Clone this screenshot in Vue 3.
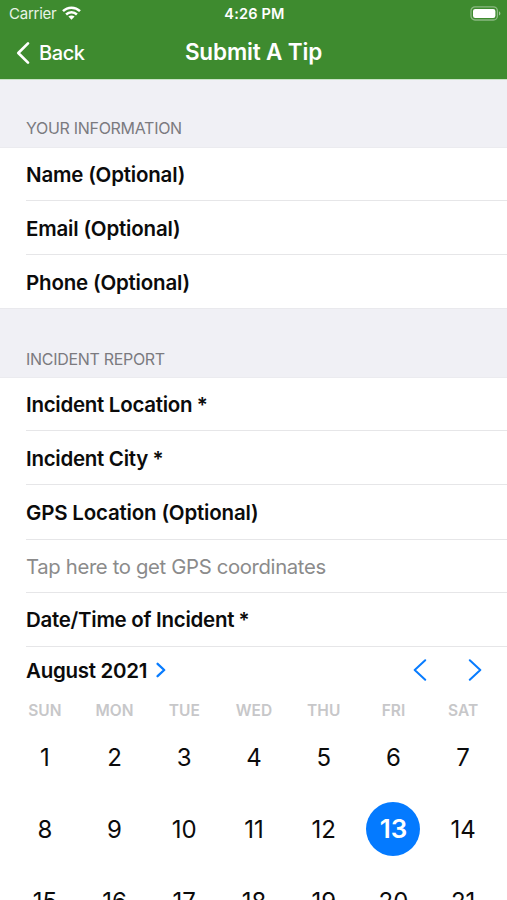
<script setup>
const contactFields = ['Name (Optional)', 'Email (Optional)', 'Phone (Optional)']
const incidentFields = [
  { label: 'Incident Location', required: true },
  { label: 'Incident City', required: true },
  { label: 'GPS Location (Optional)', tall: true },
  { label: 'Tap here to get GPS coordinates', hint: true },
  { label: 'Date/Time of Incident', required: true },
]
const weekdays = ['SUN', 'MON', 'TUE', 'WED', 'THU', 'FRI', 'SAT']
const days = Array.from({ length: 21 }, (_, i) => i + 1)
const selected = 13
</script>

<template>
  <div class="screen">
    <header class="top">
      <div class="status">
        <div class="carrier">
          <span>Carrier</span>
          <svg class="wifi" width="19" height="14" viewBox="0 0 19 14" fill="none" stroke="#fff" stroke-width="2.5">
            <path d="M1 5.2C5.7 .6 13.3 .6 18 5.2" />
            <path d="M4.1 8.5C7.1 5.6 11.9 5.6 14.9 8.5" />
            <path d="M9.5 13.7L6.4 10.6C8.1 9 10.9 9 12.6 10.6Z" fill="#fff" stroke="none" />
          </svg>
        </div>
        <span class="clock">4:26 PM</span>
        <svg class="battery" width="31" height="15" viewBox="0 0 31 15">
          <rect x="1" y=".8" width="26.4" height="13.2" rx="4" fill="none" stroke="#fff" stroke-opacity=".4" stroke-width="1.3" />
          <rect x="3" y="2.9" width="22.4" height="9" rx="2.2" fill="#fff" />
          <path d="M29 5.2C30.9 6 30.9 8.8 29 9.6Z" fill="#fff" fill-opacity=".5" />
        </svg>
      </div>
      <nav class="nav">
        <div class="back">
          <svg width="14" height="24" viewBox="0 0 14 24" fill="none" stroke="#fff" stroke-width="2.7" stroke-linecap="round" stroke-linejoin="round">
            <path d="M12 2.4L2.3 12L12 21.6" />
          </svg>
          <span>Back</span>
        </div>
        <h1>Submit A Tip</h1>
      </nav>
    </header>

    <h2 class="section first"><span>YOUR INFORMATION</span></h2>
    <ul class="list">
      <li v-for="f in contactFields" :key="f"><span>{{ f }}</span></li>
    </ul>

    <h2 class="section"><span>INCIDENT REPORT</span></h2>
    <ul class="list incident">
      <li v-for="f in incidentFields" :key="f.label" :class="{ hint: f.hint, required: f.required, tall: f.tall }">
        <span>{{ f.label }}<span v-if="f.required" class="star"> *</span></span>
      </li>
    </ul>

    <section class="calendar">
      <div class="month">
        <span class="name">August 2021</span>
        <svg class="more" width="10" height="16" viewBox="0 0 10 16" fill="none" stroke="#087cff" stroke-width="2.3" stroke-linecap="round" stroke-linejoin="round">
          <path d="M1.6 1.8L8.2 8L1.6 14.2" />
        </svg>
        <div class="arrows">
          <svg width="14" height="22" viewBox="0 0 14 22" fill="none" stroke="#087cff" stroke-width="2" stroke-linecap="round" stroke-linejoin="round">
            <path d="M12.2 1.2L1.7 11L12.2 20.8" />
          </svg>
          <svg width="14" height="22" viewBox="0 0 14 22" fill="none" stroke="#087cff" stroke-width="2" stroke-linecap="round" stroke-linejoin="round">
            <path d="M1.8 1.2L12.3 11L1.8 20.8" />
          </svg>
        </div>
      </div>
      <div class="grid weekdays">
        <span v-for="w in weekdays" :key="w">{{ w }}</span>
      </div>
      <div class="grid days">
        <span v-for="d in days" :key="d" :class="{ selected: d === selected }">{{ d }}</span>
      </div>
    </section>
  </div>
</template>

<style>
body {
  margin: 0;
  background: #fff;
}
</style>

<style scoped>
.screen {
  width: 507px;
  height: 900px;
  overflow: hidden;
  background: #fff;
  color: #0b0b0b;
  font-family: Inter, 'Liberation Sans', sans-serif;
}
.top {
  height: 79px;
  background: #3e8b2f;
  border-bottom: 1px solid #c9e3c6;
  color: #fff;
}
.status {
  display: grid;
  grid-template-columns: 1fr auto 1fr;
  align-items: center;
  height: 27px;
  padding: 0 6px 0 8px;
}
.carrier {
  display: flex;
  align-items: center;
  gap: 6px;
  padding-left: 1px;
  font-size: 15px;
  letter-spacing: -0.25px;
  color: #e9f3e7;
}
.wifi {
  margin-top: -2px;
}
.clock {
  font-size: 14.5px;
  font-weight: 600;
  letter-spacing: 0.2px;
}
.battery {
  justify-self: end;
}
.nav {
  display: grid;
  grid-template-columns: 1fr auto 1fr;
  align-items: center;
  height: 48px;
  padding: 0 16px;
}
.back {
  display: flex;
  align-items: center;
  gap: 9px;
  padding-top: 4px;
  font-size: 20px;
  font-weight: 500;
  letter-spacing: -0.4px;
}
h1 {
  margin: 0;
  font-size: 22.5px;
  font-weight: 600;
  letter-spacing: -0.15px;
}
.section {
  display: flex;
  align-items: flex-end;
  height: 69px;
  margin: 0;
  padding: 0 26px 8px;
  box-sizing: border-box;
  background: #f0f0f5;
  border-bottom: 1px solid #ebebef;
  color: #7b7a7f;
  font-size: 16px;
  line-height: 20px;
  font-weight: 400;
  letter-spacing: -0.3px;
}
.section.first {
  height: 68px;
  padding-bottom: 9px;
}
.list {
  list-style: none;
  margin: 0;
  padding: 0 0 0 26px;
  border-bottom: 1px solid #e9e9ed;
}
.list li {
  display: flex;
  align-items: center;
  height: 54px;
  padding-top: 2px;
  box-sizing: border-box;
  border-bottom: 1px solid #e6e6e8;
  font-size: 20.5px;
  font-weight: 600;
  letter-spacing: -0.19px;
  white-space: nowrap;
}
.list li:first-child {
  height: 53px;
  padding-top: 0;
}
.list li:last-child {
  height: 53px;
  border-bottom: 0;
}
.list li.tall {
  height: 55px;
  padding-top: 1px;
}
.incident {
  border-bottom: 0;
}
.incident li:last-child {
  height: 54px;
  padding-top: 0;
  border-bottom: 1px solid #e6e6e8;
}
.list li.required {
  letter-spacing: -0.28px;
}
.star {
  letter-spacing: -0.7px;
}
.list li.hint {
  height: 53px;
  padding-top: 0;
  color: #8b8b8b;
  font-size: 20.3px;
  font-weight: 400;
  letter-spacing: -0.34px;
}
.month {
  display: flex;
  align-items: center;
  height: 46px;
  padding: 0 25px 0 26px;
}
.month .name {
  font-size: 20.5px;
  font-weight: 600;
  letter-spacing: -0.27px;
}
.more {
  margin-left: 9px;
}
.arrows {
  display: flex;
  gap: 41px;
  margin-left: auto;
}
.grid {
  display: grid;
  grid-template-columns: repeat(7, 1fr);
  justify-items: center;
  align-items: center;
  padding: 0 9px 0 10px;
}
.weekdays {
  height: 34px;
  color: #c7c7c9;
  font-size: 15.5px;
  font-weight: 600;
}
.days {
  grid-auto-rows: 72px;
  margin-top: -6px;
  font-size: 24px;
}
.selected {
  display: flex;
  align-items: center;
  justify-content: center;
  width: 54px;
  height: 54px;
  padding-bottom: 2px;
  box-sizing: border-box;
  border-radius: 50%;
  background: #047aff;
  color: #fff;
  font-size: 26px;
  font-weight: 600;
}
</style>
